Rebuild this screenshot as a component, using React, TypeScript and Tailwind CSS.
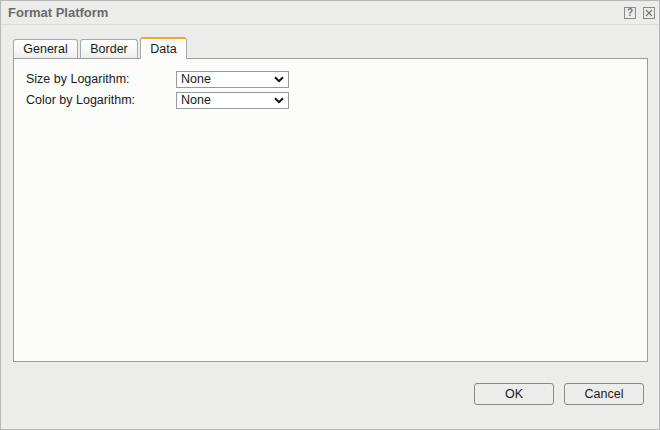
import React from "react";

const font = { fontFamily: '"Liberation Sans", Arial, sans-serif' };

function Select() {
  return (
    <div className="w-[113px] h-[17px] border border-[#9a9a9a] bg-white flex items-center justify-between pl-[4px] pr-[4px]">
      <span className="text-[12.5px] text-[#1a1a1a] leading-none">None</span>
      <svg width="10" height="7" viewBox="0 0 10 7">
        <path d="M1 1.2 L5 5.2 L9 1.2" fill="none" stroke="#111" strokeWidth="2" />
      </svg>
    </div>
  );
}

export default function App() {
  return (
    <div
      className="w-[660px] h-[430px] bg-[#ecedeb] border border-[#b8b8b8] flex flex-col text-[#1a1a1a]"
      style={font}
    >
      <div className="h-[24px] border-b border-[#d9dad8] flex items-center justify-between pl-[7px] pr-[4px]">
        <span className="text-[13px] font-bold text-[#6a6a6a]">Format Platform</span>
        <div className="flex gap-[7px] items-center">
          <div className="w-[12px] h-[12px] border border-[#8a8a8a] flex items-center justify-center text-[10px] font-bold text-[#777] leading-none">
            ?
          </div>
          <div className="w-[12px] h-[12px] border border-[#8a8a8a] flex items-center justify-center">
            <svg width="8" height="8" viewBox="0 0 8 8">
              <path d="M1 1 L7 7 M7 1 L1 7" stroke="#777" strokeWidth="1.2" />
            </svg>
          </div>
        </div>
      </div>
      <div className="pl-[12px] pr-[12px] pt-[11px] flex flex-col">
        <div className="flex items-end h-[22px] gap-[2px] relative z-10">
          <div className="h-[19px] w-[65px] border border-b-0 border-[#a4a9ab] rounded-t-[3px] bg-gradient-to-b from-white to-[#eef0ee] flex items-center justify-center text-[12.5px]">
            General
          </div>
          <div className="h-[19px] w-[58px] border border-b-0 border-[#a4a9ab] rounded-t-[3px] bg-gradient-to-b from-white to-[#eef0ee] flex items-center justify-center text-[12.5px]">
            Border
          </div>
          <div className="h-[22px] w-[47px] border border-b-0 border-[#a4a9ab] border-t-2 border-t-[#f0a830] rounded-t-[3px] bg-[#fcfdfb] flex items-center justify-center text-[12.5px] mb-[-1px]">
            Data
          </div>
        </div>
        <div className="w-[635px] h-[304px] border border-[#9c9c9c] bg-[#fcfdfb] pl-[12px] pt-[12px] flex flex-col gap-[4px]">
          <div className="flex items-center h-[17px]">
            <span className="w-[150px] text-[12.5px] leading-[17px]">Size by Logarithm:</span>
            <Select />
          </div>
          <div className="flex items-center h-[17px]">
            <span className="w-[150px] text-[12.5px] leading-[17px]">Color by Logarithm:</span>
            <Select />
          </div>
        </div>
        <div className="flex justify-end gap-[10px] mt-[21px] pr-[3px]">
          <button className="w-[80px] h-[22px] border border-[#8a8a8a] rounded-[3px] bg-[#ecedeb] text-[12.5px]">
            OK
          </button>
          <button className="w-[80px] h-[22px] border border-[#8a8a8a] rounded-[3px] bg-[#ecedeb] text-[12.5px]">
            Cancel
          </button>
        </div>
      </div>
    </div>
  );
}
